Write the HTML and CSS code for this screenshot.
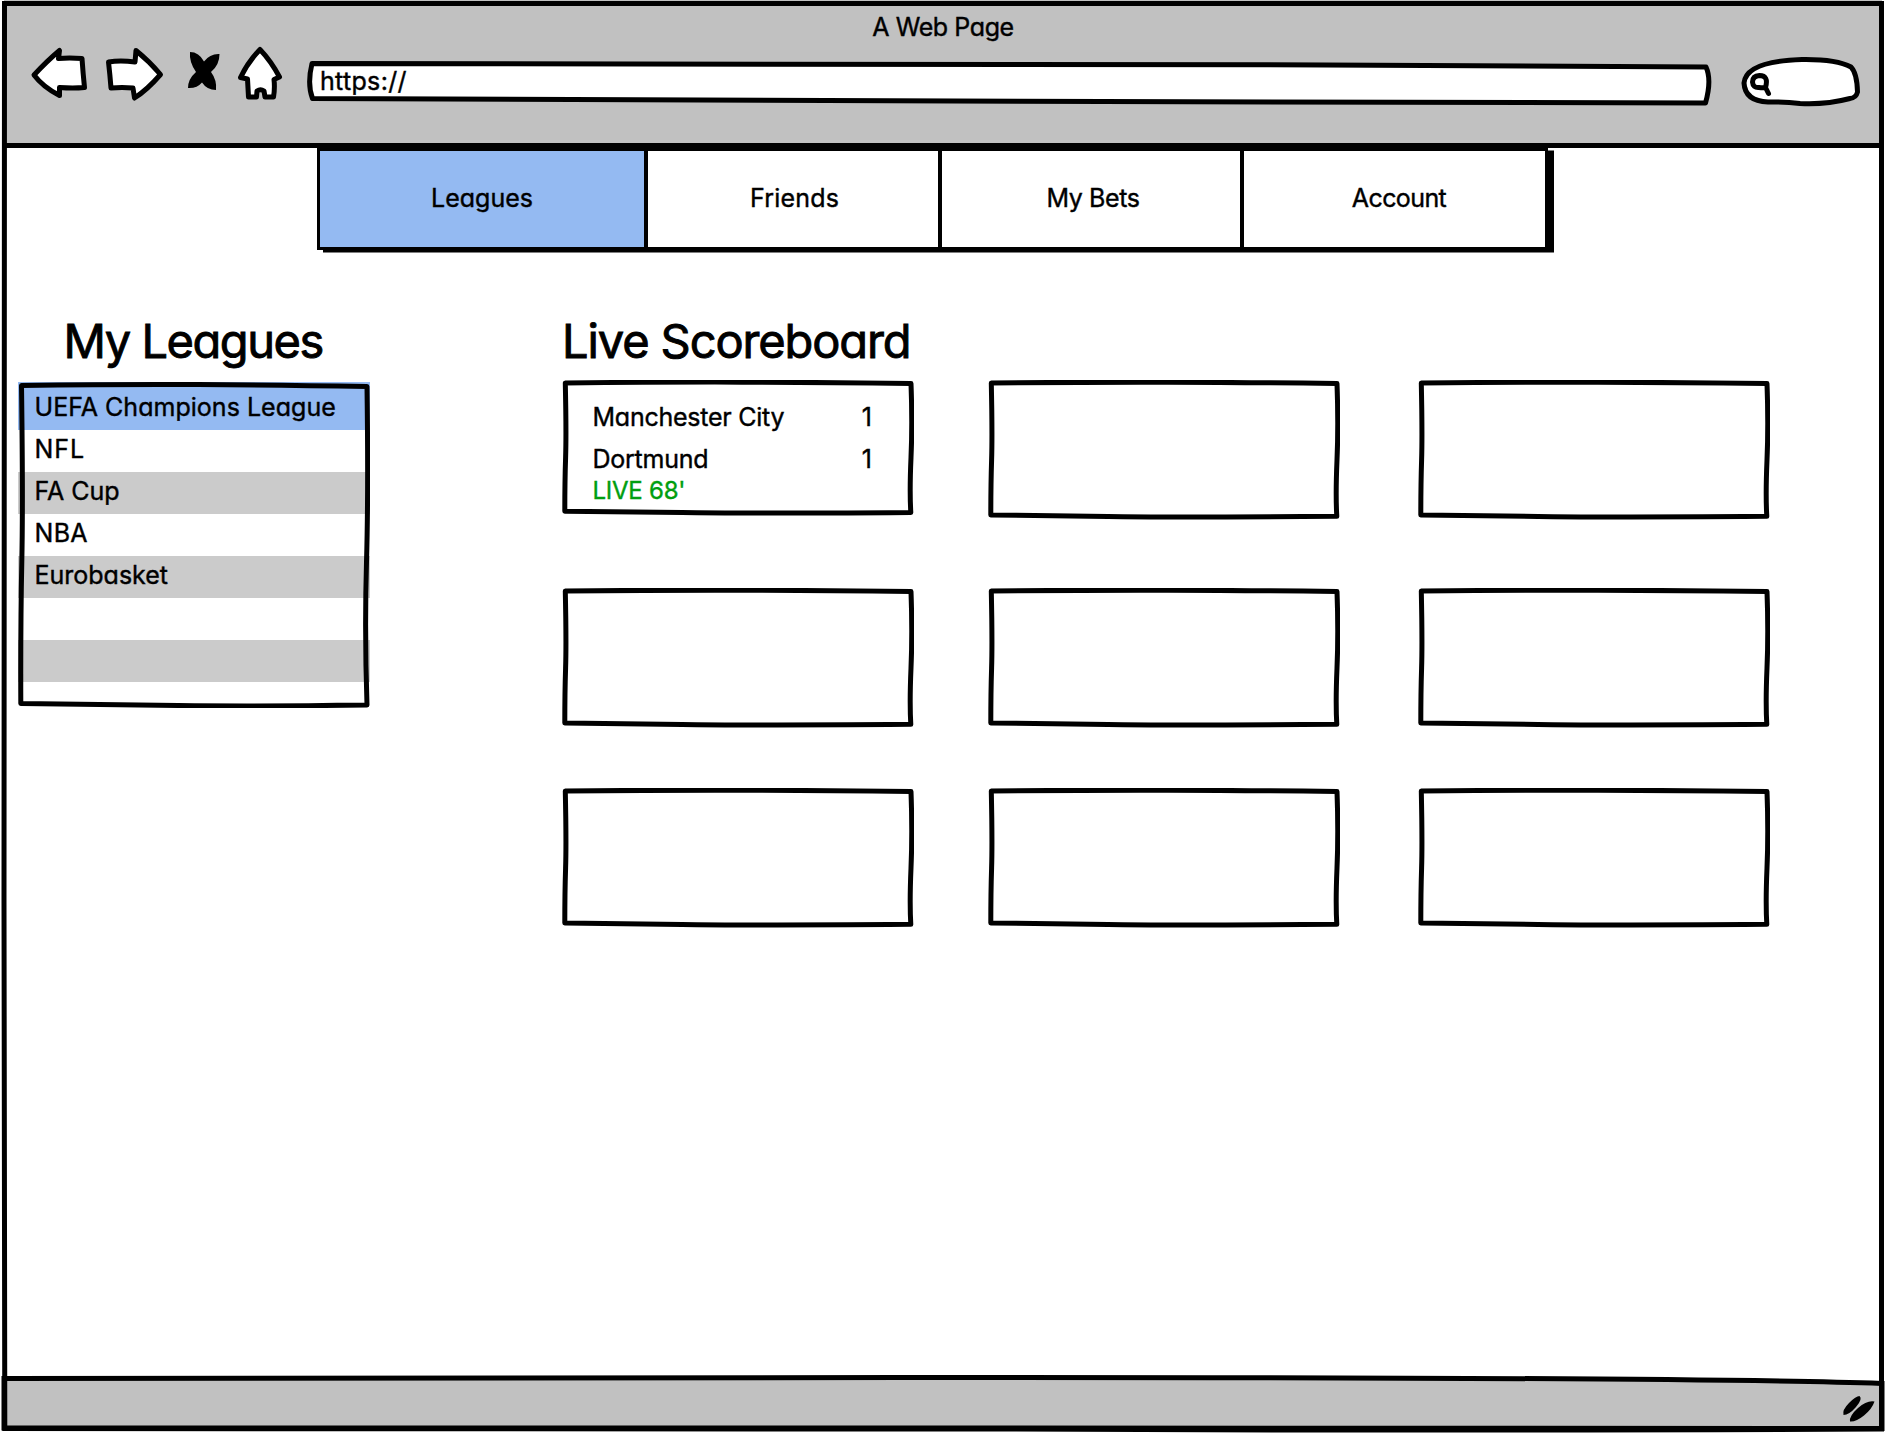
FILE: index.html
```
<!DOCTYPE html>
<html lang="en">
<head>
<meta charset="utf-8">
<title>A Web Page</title>
<link rel="stylesheet" href="styles.css">
</head>
<body>
<svg class="defs" width="0" height="0" aria-hidden="true">
  <symbol id="sketch-box" viewBox="0 0 352 140" preserveAspectRatio="none">
    <path d="M3.300 3Q100 2 180 2.200T349 3.600Q350.500 45 349 80T348.800 136.300Q180 137.500 120 136.500T2.800 135Q2.800 105 3.600 80T3.300 3Z" vector-effect="non-scaling-stroke"/>
  </symbol>
  <symbol id="sketch-list" viewBox="0 0 352 326" preserveAspectRatio="none">
    <path d="M3.500 3.500Q100 2.200 180 2.600T349 4.500Q350.500 110 348.500 180T349 323Q240 324.500 160 323.500T2.800 321.500Q2.500 240 3.800 180T3.500 3.500Z"/>
  </symbol>
</svg>
<div class="browser">
  <header class="chrome">
    <div class="title"><span class="t-title">A Web Page</span></div>
    <div class="toolbar">
      <svg class="nav-icons" viewBox="0 0 260 60" width="260" height="60">
        <g class="ink">
          <path d="M6 30Q19 16 31.500 5.500L30.500 13.500Q41 12.500 54 13.500Q55 28 56.500 42.500Q45 43.500 31.500 42.500L31.500 50.500Q15 42 6 30Z"/>
          <path d="M80.500 17Q92 15 107 17L108 5.500Q121 16 132.500 29.500Q119 45 106.500 53L105 43Q94 42 83 43Q82 30 80.500 17Z"/>
          <path d="M232 4.500Q243 16 251.500 32L246 34.500Q247 43 245.500 52H237L236 46Q232.500 43.500 229 46L228.500 52H220.500L219.500 34L212.500 32.500Q220 17 232 4.500Z"/>
        </g>
        <path d="M162 7Q171 7 176 16.500Q182 8.500 191.500 9Q191.500 20 183 27Q189 35 188 45Q179 45 174 37.500Q169 43.500 160 43Q160 34 168 27Q161 17 162 7Z"/>
      </svg>
      <div class="address">
        <svg class="ink overlay" viewBox="0 0 1408 48" preserveAspectRatio="none"><path d="M6 3.500C300 3 900 3.500 1400 7Q1406 20 1399.500 43C1000 43 400 40 6.500 38.500Q1 24 6 3.500Z"/></svg>
        <span class="t-url">https://</span>
      </div>
      <svg class="search ink" viewBox="0 0 124 54" width="124" height="54">
        <path d="M28 47Q5 46 4 28Q6 6 62 4.500Q96 4 111 12Q117 18 117.500 37Q116 43 110 43.500Q85 50 60 48.500Q45 46.500 28 47Z"/>
        <path class="lens" d="M25.500 32.500Q29 20.500 19.500 20.500Q12.500 21 12.500 27Q13 33 19 32.500Q23 33 25.500 32.500L28.500 38.500"/>
      </svg>
    </div>
  </header>
  <main class="page">
    <nav class="tabs">
      <a class="tab tab-leagues active"><span class="t-leagues">Leagues</span></a>
      <a class="tab tab-friends"><span class="t-friends">Friends</span></a>
      <a class="tab tab-bets"><span class="t-bets">My Bets</span></a>
      <a class="tab tab-account"><span class="t-account">Account</span></a>
    </nav>
    <div class="columns">
      <section class="leagues">
        <h2 class="h-leagues">My Leagues</h2>
        <div class="list">
          <ul>
            <li class="selected"><span class="t-uefa">UEFA Champions League</span></li>
            <li><span class="t-nfl">NFL</span></li>
            <li><span>FA Cup</span></li>
            <li><span class="t-nba">NBA</span></li>
            <li><span>Eurobasket</span></li>
            <li></li>
            <li></li>
          </ul>
          <svg class="ink overlay hollow"><use href="#sketch-list" width="100%" height="100%"/></svg>
        </div>
      </section>
      <section class="scores">
        <h2 class="h-scores">Live Scoreboard</h2>
        <div class="grid">
          <article class="card live">
            <svg class="ink overlay hollow"><use href="#sketch-box" width="100%" height="100%"/></svg>
            <div class="score"><span class="t-city">Manchester City</span><span>1</span></div>
            <div class="score"><span class="t-dortmund">Dortmund</span><span>1</span></div>
            <div class="status">LIVE 68'</div>
          </article>
          <article class="card"><svg class="ink overlay hollow"><use href="#sketch-box" width="100%" height="100%"/></svg></article>
          <article class="card"><svg class="ink overlay hollow"><use href="#sketch-box" width="100%" height="100%"/></svg></article>
          <article class="card"><svg class="ink overlay hollow"><use href="#sketch-box" width="100%" height="100%"/></svg></article>
          <article class="card"><svg class="ink overlay hollow"><use href="#sketch-box" width="100%" height="100%"/></svg></article>
          <article class="card"><svg class="ink overlay hollow"><use href="#sketch-box" width="100%" height="100%"/></svg></article>
          <article class="card"><svg class="ink overlay hollow"><use href="#sketch-box" width="100%" height="100%"/></svg></article>
          <article class="card"><svg class="ink overlay hollow"><use href="#sketch-box" width="100%" height="100%"/></svg></article>
          <article class="card"><svg class="ink overlay hollow"><use href="#sketch-box" width="100%" height="100%"/></svg></article>
        </div>
      </section>
    </div>
  </main>
  <footer class="statusbar">
    <svg viewBox="0 0 1886 60" width="1886" height="60">
      <path class="bar" d="M4 4.500C120 7 500 4.500 900 3.500Q1700 3 1882 9.500V54.500Q1400 56 1000 54T4 54Z"/>
      <path d="M1843.500 41Q1842 36 1849 29T1859.500 22Q1863 25 1856 33T1843.500 41ZM1850 47.500Q1849 42 1858 34T1874.500 27.500Q1872 35 1864 41.500T1850 47.500Z"/>
    </svg>
  </footer>
  <svg class="frame" viewBox="0 0 1886 1434"><path d="M4.500 3.500H1881.500V1429Q1400 1431 1000 1429T4.800 1428.500L4 900L4.500 3.500Z"/></svg>
</div>
</body>
</html>
```
FILE: styles.css
```
* { box-sizing: border-box; }

body {
  margin: 0;
  background: #fff;
  color: #000;
  font: 25px/38px Inter, "Liberation Sans", sans-serif;
  font-feature-settings: "cv11" 1;
  -webkit-text-stroke: 0.4px currentColor;
}

.defs { position: absolute; }

.ink {
  fill: #fff;
  stroke: #000;
  stroke-width: 5px;
  stroke-linejoin: round;
  stroke-linecap: round;
}
.ink .lens { stroke-width: 5px; }
.ink.hollow { fill: none; }

.overlay {
  position: absolute;
  inset: 0;
  width: 100%;
  height: 100%;
}

.browser {
  position: relative;
  display: flex;
  flex-direction: column;
  width: 1886px;
  height: 1434px;
  overflow: hidden;
}

.frame {
  position: absolute;
  inset: 0;
  width: 1886px;
  height: 1434px;
  fill: none;
  stroke: #000;
  stroke-width: 5px;
  pointer-events: none;
}

.chrome {
  height: 148px;
  margin: 0 4px;
  padding-top: 4px;
  background: #c1c1c1;
  border-bottom: 5px solid #000;
}
.title {
  height: 41px;
  line-height: 46px;
  text-align: center;
}

.toolbar { display: flex; padding-left: 24px; }
.nav-icons { flex: none; }
.address {
  position: relative;
  flex: none;
  width: 1408px;
  height: 48px;
  margin: 15px 26px 0 18px;
  padding: 2px 0 0 14px;
}
.address span { position: relative; }
.search { flex: none; margin-top: 10px; }

.page { flex: 1; }

.tabs {
  display: flex;
  width: 1231px;
  height: 102px;
  margin-left: 317px;
  border: 3.5px solid #000;
  border-width: 3px 3px 3px 3.5px;
  box-shadow: 6px 2.5px 0 #000;
}
.tab {
  display: flex;
  align-items: center;
  justify-content: center;
  padding-bottom: 2px;
  border-left: 4px solid #000;
  background: #fff;
}
.tab:first-child { border-left: 0; }
.tab-leagues { width: 324px; }
.tab-friends { width: 294px; padding-left: 3px; }
.tab-bets { width: 302px; padding-left: 4px; }
.tab-account { flex: 1; padding-left: 9px; }
.active { background: #94baf2; }

.columns { display: flex; padding-top: 63px; }
h2 {
  margin: 0;
  font-size: 47px;
  font-weight: 400;
  line-height: 56px;
  -webkit-text-stroke: 0.9px currentColor;
}

.leagues { width: 352px; margin-left: 18px; }
.h-leagues { padding-left: 45.5px; white-space: nowrap; }
.list { position: relative; height: 326px; margin-top: 13px; }
.list ul {
  margin: 0;
  padding: 0;
  list-style: none;
}
.list li { height: 42px; padding-left: 16.5px; }
.list li:nth-child(odd) { background: #cbcbcb; }
.list li.selected { height: 48px; padding-top: 6px; background: #94baf2; }

.scores { margin-left: 192px; }
.grid {
  display: grid;
  grid-template-columns: 426px 430px 352px;
  grid-template-rows: 208px 200px 140px;
  margin-top: 11px;
}
.card { position: relative; width: 352px; height: 140px; }
.card.live { height: 136px; padding: 18px 42px 0 30.5px; }
.score { display: flex; justify-content: space-between; height: 42px; }
.status { margin-top: -10px; color: #009e0f; font-size: 24px; letter-spacing: -0.25px; }

.statusbar { height: 60px; }
.statusbar svg { display: block; }
.bar { fill: #c1c1c1; stroke: #000; stroke-width: 5px; }

/* Tracking per label */
.t-title { letter-spacing: -0.4px; }
.t-url { letter-spacing: 0.32px; }
.t-leagues { letter-spacing: 0; }
.t-friends { letter-spacing: 0.2px; }
.t-bets { letter-spacing: -0.38px; }
.t-account { letter-spacing: -0.6px; }
.h-leagues { letter-spacing: -1.45px; }
.h-scores { letter-spacing: -1.1px; }
.t-uefa { letter-spacing: 0.03px; }
.t-nfl { letter-spacing: 1px; }
.t-nba { letter-spacing: 0.3px; }
.t-city { letter-spacing: -0.25px; }
.t-dortmund { letter-spacing: -0.25px; }
```
